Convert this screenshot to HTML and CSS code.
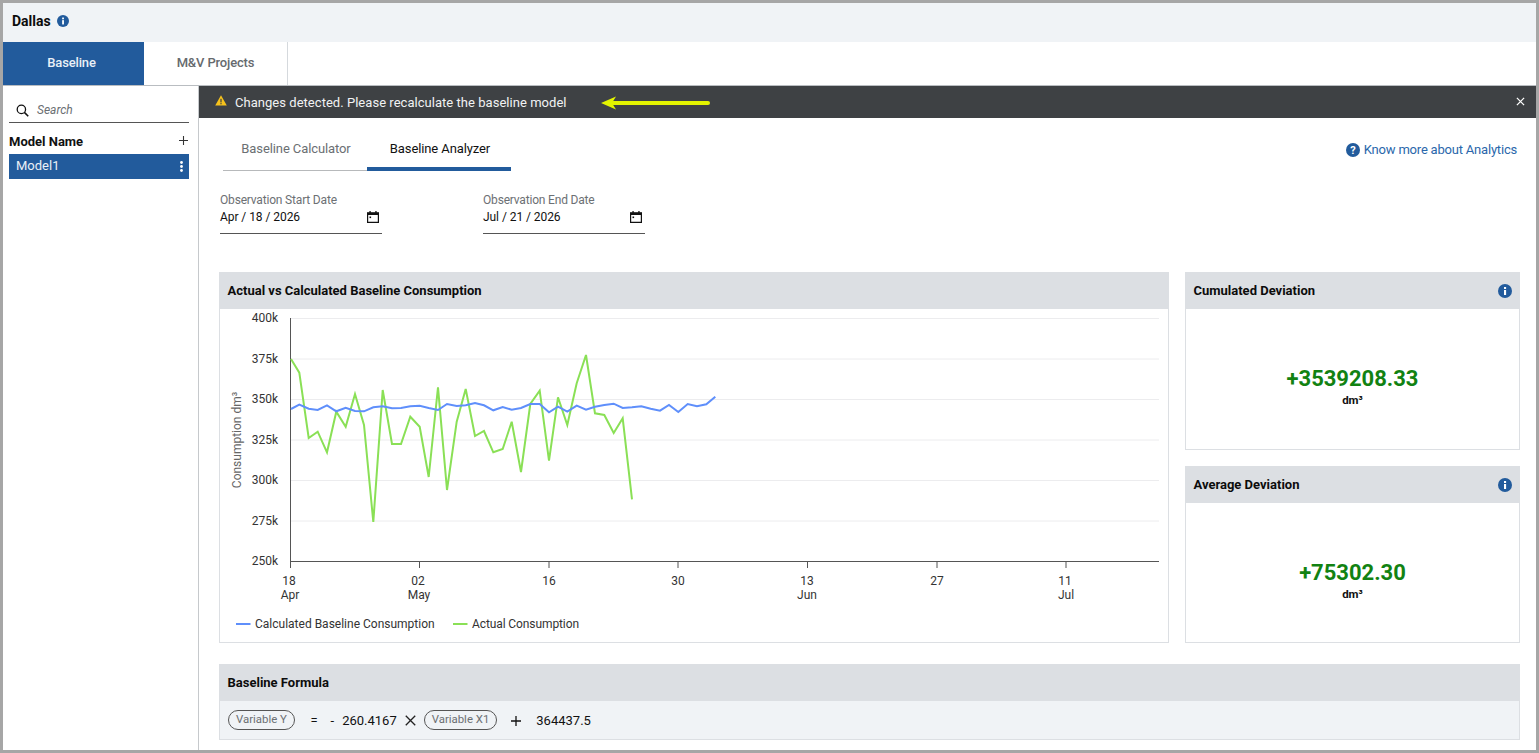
FILE: index.html
```html
<!DOCTYPE html>
<html lang="en">
<head>
<meta charset="utf-8">
<title>Dallas - Baseline</title>
<link rel="stylesheet" href="styles.css">
</head>
<body>
<div class="window">
  <header class="site-head">
    <h1 class="site-name">Dallas</h1>
    <svg class="info-icon" viewBox="0 0 14 14"><circle cx="7" cy="7" r="7" fill="#225b9c"/><rect x="6" y="6" width="2.1" height="5" fill="#fff"/><rect x="6" y="3" width="2.1" height="2" fill="#fff"/></svg>
  </header>
  <nav class="main-tabs">
    <a class="main-tab active">Baseline</a>
    <a class="main-tab">M&amp;V Projects</a>
  </nav>
  <div class="body-row">
    <aside class="sidebar">
      <div class="search">
        <svg class="search-icon" viewBox="0 0 14 14"><circle cx="5.8" cy="5.8" r="4.5" fill="none" stroke="#111" stroke-width="1.4"/><path d="M9 9l4.2 4.2" stroke="#111" stroke-width="1.6" fill="none"/></svg>
        <span class="search-text">Search</span>
      </div>
      <div class="model-head">
        <span>Model Name</span>
        <svg class="plus-icon" viewBox="0 0 10 10"><path d="M5 0v10M0 5h10" stroke="#333" stroke-width="1.2"/></svg>
      </div>
      <div class="model-row">
        <span>Model1</span>
        <svg class="kebab" viewBox="0 0 3 11"><circle cx="1.5" cy="1.5" r="1.400" fill="#fff"/><circle cx="1.5" cy="5.5" r="1.400" fill="#fff"/><circle cx="1.5" cy="9.5" r="1.400" fill="#fff"/></svg>
      </div>
    </aside>
    <main class="main">
      <div class="banner">
        <svg class="warn-icon" viewBox="0 0 12 11"><path d="M6 .3L11.8 10.6H.2z" fill="#f6c21c"/><rect x="5.4" y="3.8" width="1.2" height="3.6" fill="#3e4144"/><rect x="5.4" y="8.1" width="1.2" height="1.2" fill="#3e4144"/></svg>
        <span class="banner-text">Changes detected. Please recalculate the baseline model</span>
        <svg class="arrow" viewBox="0 0 110 14"><path d="M12 7H107" stroke="#e3f400" stroke-width="4" stroke-linecap="round"/><path d="M0 7L15 .5L11 7L15 13.5z" fill="#e3f400"/></svg>
        <svg class="close-icon" viewBox="0 0 10 10"><path d="M1 1l8 8M9 1l-8 8" stroke="#fff" stroke-width="1.4"/></svg>
      </div>
      <div class="content">
        <div class="tabs-row">
          <div class="sub-tabs">
            <a class="sub-tab">Baseline Calculator</a>
            <a class="sub-tab active">Baseline Analyzer</a>
          </div>
          <a class="help-link">
            <svg class="help-icon" viewBox="0 0 14 14"><circle cx="7" cy="7" r="7" fill="#225b9c"/><text x="7" y="10.8" text-anchor="middle" class="help-mark">?</text></svg>
            Know more about Analytics
          </a>
        </div>
        <div class="dates">
          <div class="date-field">
            <label class="date-label">Observation Start Date</label>
            <div class="date-value"><span>Apr / 18 / 2026</span>
              <svg class="cal-icon" viewBox="0 0 12 12"><path d="M.6 2.2h10.8v9.2H.6z" fill="none" stroke="#111" stroke-width="1.2"/><rect x="0" y="1.4" width="12" height="2.6" fill="#111"/><rect x="2.4" y="0" width="1.3" height="2" fill="#111"/><rect x="8.3" y="0" width="1.3" height="2" fill="#111"/><rect x="2.5" y="5.5" width="1.6" height="1.6" fill="#111"/></svg>
            </div>
          </div>
          <div class="date-field">
            <label class="date-label">Observation End Date</label>
            <div class="date-value"><span>Jul / 21 / 2026</span>
              <svg class="cal-icon" viewBox="0 0 12 12"><path d="M.6 2.2h10.8v9.2H.6z" fill="none" stroke="#111" stroke-width="1.2"/><rect x="0" y="1.4" width="12" height="2.6" fill="#111"/><rect x="2.4" y="0" width="1.3" height="2" fill="#111"/><rect x="8.3" y="0" width="1.3" height="2" fill="#111"/><rect x="2.5" y="5.5" width="1.6" height="1.6" fill="#111"/></svg>
            </div>
          </div>
        </div>
        <div class="panels">
          <section class="panel chart-panel">
            <h2 class="panel-head">Actual vs Calculated Baseline Consumption</h2>
            <svg class="chart" viewBox="220 309 948 333">
              <g class="grid">
                <path d="M291 318.5H1159M291 359H1159M291 399.500H1159M291 440H1159M291 480.500H1159M291 521H1159"/>
              </g>
              <path class="axis" d="M290.500 318V568M290 561.500H1159M419.500 561V568M549 561V568M678 561V568M807.500 561V568M937 561V568M1066 561V568"/>
              <g class="tick-y">
                <text x="278" y="322">400k</text><text x="278" y="363">375k</text><text x="278" y="403">350k</text><text x="278" y="444">325k</text><text x="278" y="484">300k</text><text x="278" y="525">275k</text><text x="278" y="565">250k</text>
              </g>
              <text class="y-title" transform="translate(241 440) rotate(-90)" text-anchor="middle">Consumption dm³</text>
              <g class="tick-x">
                <text x="289" y="585">18</text><text x="290" y="599">Apr</text>
                <text x="418" y="585">02</text><text x="419" y="599">May</text>
                <text x="549" y="585">16</text>
                <text x="678" y="585">30</text>
                <text x="807" y="585">13</text><text x="807" y="599">Jun</text>
                <text x="937" y="585">27</text>
                <text x="1065" y="585">11</text><text x="1066" y="599">Jul</text>
              </g>
              <polyline class="line-green" points="291,359 299.3,372.7 308.7,438 317.7,431.7 327,452.3 336.3,411.7 345.7,426.7 355,394 364,425 373.3,522 382.7,390 392,444 401,444 410.3,416.7 419.7,426.7 428.7,477 438,387.3 447,490 456.7,421.7 465.7,389 475,436 484,431 493.3,452.3 502.7,449 511.7,421.7 521,472 530.3,404 539.7,390.7 549,460.7 558,397.3 567.3,425 576.7,383.3 586,355 595,413.3 604.3,415 613.7,433 622.7,418.3 632,499.3"/>
              <polyline class="line-blue" points="291,409 299.3,404.7 308.7,408.7 317.7,410 327,405.3 336.3,411.3 345.7,407.7 355,411 364,411.3 373.3,407.3 382.7,406.3 392,408.3 401,408 410.3,406.3 419.7,405.7 428.7,408 438,410 447,404 456.7,406 465.7,405.3 475,403 484,405.3 493.3,410.3 502.7,407 511.7,409.7 521,408 530.3,404 539.7,404 549,412.3 558,406.7 567.3,411.7 576.7,405.7 586,409.7 595,406.7 604.3,405 613.7,403.7 622.7,408 632,407.3 641.3,406.3 650.7,408.7 660,410.7 669,405 678.3,412 687.7,404 697,406.3 706.3,404.3 715.3,396.7"/>
              <path class="legend-blue" d="M236 624H250.500"/>
              <text class="legend-text" x="255" y="628">Calculated Baseline Consumption</text>
              <path class="legend-green" d="M453 624H467.500"/>
              <text class="legend-text legend-short" x="472" y="628">Actual Consumption</text>
            </svg>
          </section>
          <div class="side-cards">
            <section class="panel stat-card">
              <h2 class="panel-head">Cumulated Deviation
                <svg class="info-icon" viewBox="0 0 14 14"><circle cx="7" cy="7" r="7" fill="#225b9c"/><rect x="6" y="6" width="2.1" height="5" fill="#fff"/><rect x="6" y="3" width="2.1" height="2" fill="#fff"/></svg>
              </h2>
              <div class="stat-body">
                <div class="stat-value">+3539208.33</div>
                <div class="stat-unit">dm³</div>
              </div>
            </section>
            <section class="panel stat-card">
              <h2 class="panel-head">Average Deviation
                <svg class="info-icon" viewBox="0 0 14 14"><circle cx="7" cy="7" r="7" fill="#225b9c"/><rect x="6" y="6" width="2.1" height="5" fill="#fff"/><rect x="6" y="3" width="2.1" height="2" fill="#fff"/></svg>
              </h2>
              <div class="stat-body">
                <div class="stat-value">+75302.30</div>
                <div class="stat-unit">dm³</div>
              </div>
            </section>
          </div>
        </div>
        <section class="panel formula">
          <h2 class="panel-head">Baseline Formula</h2>
          <div class="formula-body">
            <span class="pill">Variable Y</span>
            <span class="op op-eq">=</span>
            <span class="op op-minus">-</span>
            <span class="num">260.4167</span>
            <svg class="times" viewBox="0 0 10 10"><path d="M.7.7l8.6 8.6M9.300.7L.7 9.300" stroke="#222" stroke-width="1.200"/></svg>
            <span class="pill">Variable X1</span>
            <svg class="plus" viewBox="0 0 10 10"><path d="M5 0v10M0 5h10" stroke="#111" stroke-width="1.300"/></svg>
            <span class="num">364437.5</span>
          </div>
        </section>
      </div>
    </main>
  </div>
</div>
</body>
</html>
```

FILE: styles.css
```css
* { box-sizing: border-box; }
html, body { margin: 0; padding: 0; background: #fff; }
body { font-family: Roboto, "Liberation Sans", sans-serif; color: #111; }

.window {
  width: 1539px;
  height: 753px;
  border: 3px solid #a6a6a6;
  display: flex;
  flex-direction: column;
  overflow: hidden;
}

.site-head {
  height: 39px;
  flex: none;
  background: #f0f3f6;
  display: flex;
  align-items: center;
  gap: 6px;
  padding: 0 0 3px 9px;
}
.site-name { margin: 0; font-size: 14px; font-weight: 700; color: #0c0c0c; }
.info-icon { width: 12px; height: 12px; flex: none; }

.main-tabs {
  height: 44px;
  flex: none;
  display: flex;
  border-bottom: 1px solid #b9bdc1;
}
.main-tab {
  width: 141px;
  display: flex;
  align-items: center;
  justify-content: center;
  font-size: 13px;
  font-weight: 500;
  letter-spacing: -.15px;
  padding: 0 4px 2px 0;
  color: #666a6e;
}
.main-tab + .main-tab { width: 144px; padding: 0 0 2px 0; border-right: 1px solid #d5d9dd; }
.main-tab.active { background: #225b9c; color: #e9f0f7; }

.body-row { flex: 1; display: flex; min-height: 0; }

.sidebar {
  width: 196px;
  flex: none;
  border-right: 1px solid #c6c9cc;
  padding: 12px 9px 0 6px;
}
.search {
  height: 25px;
  border-bottom: 1px solid #555;
  display: flex;
  align-items: center;
  gap: 8px;
  padding: 0 0 1px 7px;
}
.search-icon { width: 13px; height: 13px; margin-top: 2px; }
.search-text { font-size: 12px; font-style: italic; color: #6b6f73; }
.model-head {
  display: flex;
  justify-content: space-between;
  align-items: center;
  height: 31px;
  padding: 6px 1px 0 0;
  font-size: 13px;
  font-weight: 700;
}
.plus-icon { width: 9px; height: 9px; margin-top: -2px; }
.model-row {
  height: 25px;
  background: #225b9c;
  color: #eaf0f7;
  font-size: 13px;
  display: flex;
  align-items: center;
  justify-content: space-between;
  padding: 0 6px 2px 7px;
}
.kebab { width: 3px; height: 11px; margin-top: 2px; }

.main { flex: 1; min-width: 0; display: flex; flex-direction: column; }

.banner {
  height: 32px;
  flex: none;
  background: #3e4144;
  display: flex;
  align-items: center;
  padding-left: 16px;
  color: #f1f2f3;
  font-size: 13px;
}
.warn-icon { width: 12px; height: 11px; margin-top: -3px; }
.banner-text { margin-left: 8px; width: 366px; letter-spacing: .035px; }
.arrow { width: 110px; height: 14px; margin-top: 2px; }
.close-icon { width: 9px; height: 9px; margin-left: auto; margin-right: 11px; margin-top: -1px; }

.content { flex: 1; padding: 0 16px 0 20px; min-height: 0; }

.tabs-row {
  display: flex;
  justify-content: space-between;
  align-items: flex-start;
  height: 75px;
  padding-top: 9px;
  padding-left: 4px;
}
.sub-tabs { display: flex; border-bottom: 1px solid #b7b9bb; }
.sub-tab {
  width: 144px;
  height: 44px;
  display: flex;
  align-items: center;
  justify-content: center;
  font-size: 13px;
  letter-spacing: -.1px;
  padding: 3px 0 0 2px;
  color: #6b6f73;
  border-bottom: 4px solid transparent;
  margin-bottom: -1px;
}
.sub-tab.active { color: #111; border-bottom-color: #225b9c; }
.help-link {
  display: flex;
  align-items: center;
  gap: 4px;
  font-size: 13px;
  letter-spacing: -.2px;
  color: #2a67ab;
  margin-top: 15px;
  margin-right: 3px;
}
.help-icon { width: 14px; height: 14px; }
.help-mark { font-size: 11px; font-weight: 700; fill: #fff; font-family: Roboto, sans-serif; }

.dates { display: flex; gap: 101px; height: 79px; padding-left: 1px; }
.date-field { width: 162px; }
.date-label { display: block; font-size: 12px; line-height: 14px; letter-spacing: -.18px; color: #6c7074; }
.date-value {
  height: 27px;
  border-bottom: 1px solid #555;
  display: flex;
  justify-content: space-between;
  align-items: flex-start;
  font-size: 12px;
  letter-spacing: -.06px;
  padding: 3px 3px 0 0;
  line-height: 14px;
  color: #111;
}
.cal-icon { width: 12px; height: 12px; margin-top: 1px; }

.panels { display: flex; gap: 16px; height: 371px; }
.panel { border: 1px solid #dcdfe3; background: #fff; }
.panel-head {
  margin: -1px -1px 0;
  height: 37px;
  background: #dcdfe3;
  font-size: 13px;
  font-weight: 700;
  color: #0c0c0c;
  padding: 0 8px 0 8.500px;
  display: flex;
  align-items: center;
  justify-content: space-between;
}
.panel-head .info-icon { width: 14px; height: 14px; }
.chart-panel { width: 950px; flex: none; }
.chart { display: block; width: 948px; height: 333px; font-family: Roboto, sans-serif; }
.grid path { stroke: #ececee; stroke-width: 1; fill: none; }
.axis { stroke: #555; stroke-width: 1; fill: none; }
.tick-y text { font-size: 12px; fill: #333; text-anchor: end; }
.tick-x text { font-size: 12px; fill: #333; text-anchor: middle; }
.y-title { font-size: 12px; fill: #666; }
.line-green { fill: none; stroke: #8ae056; stroke-width: 2; }
.line-blue { fill: none; stroke: #5f8ffb; stroke-width: 2; }
.legend-blue { stroke: #5f8ffb; stroke-width: 2; }
.legend-green { stroke: #8ae056; stroke-width: 2; }
.legend-text { font-size: 12px; fill: #333; }
.legend-short { letter-spacing: -.1px; }

.side-cards { flex: 1; display: flex; flex-direction: column; justify-content: space-between; }
.stat-card { height: 178px; }
.stat-card + .stat-card { height: 177px; }
.stat-body {
  height: 141px;
  display: flex;
  flex-direction: column;
  align-items: center;
  justify-content: center;
  padding-top: 14px;
}
.stat-value { font-size: 22px; font-weight: 700; color: #128212; line-height: 26px; }
.stat-unit { font-size: 11.500px; font-weight: 700; color: #111; line-height: 13px; margin-top: 2px; }

.formula { margin-top: 21px; height: 76px; }
.formula-body {
  height: 38px;
  background: #f0f3f6;
  display: flex;
  align-items: center;
  padding-left: 8px;
  font-size: 13px;
  color: #111;
}
.pill {
  height: 20px;
  border: 1px solid #555;
  border-radius: 10px;
  padding: 0 7px;
  font-size: 11.400px;
  line-height: 17px;
  color: #6c7074;
  white-space: nowrap;
}
.op-eq { margin-left: 15.500px; }
.op-minus { margin-left: 13px; }
.num { margin-left: 8px; }
.times { width: 11px; height: 11px; margin: 0 8px; }
.plus { width: 10px; height: 10px; margin: 1px 15px 0 14px; }
.plus + .num { margin-left: 0; }
```
